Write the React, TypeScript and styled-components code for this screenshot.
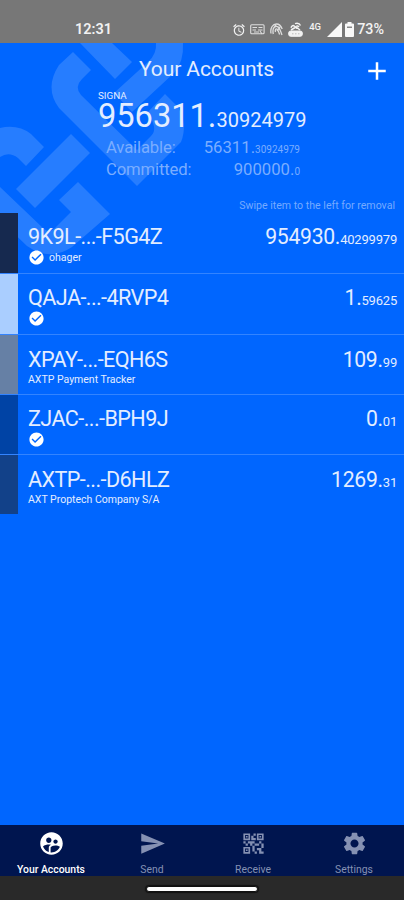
import React from "react";
import styled, { createGlobalStyle } from "styled-components";
import {
  MdAdd,
  MdAlarm,
  MdCheckCircle,
  MdQrCode2,
  MdSend,
  MdSettings,
  MdSupervisedUserCircle,
} from "react-icons/md";

const GlobalStyle = createGlobalStyle`
  * { box-sizing: border-box; }
  html, body { margin: 0; padding: 0; background: #0066ff; }
  body { font-family: Roboto, "Liberation Sans", sans-serif; color: #e3edff; }
`;

const Screen = styled.div`
  width: 404px;
  height: 900px;
  display: flex;
  flex-direction: column;
  overflow: hidden;
  background: #0066ff;
`;

const StatusBar = styled.header`
  height: 43px;
  flex: none;
  display: flex;
  align-items: flex-end;
  justify-content: space-between;
  padding: 0 20px 4px 75px;
  background: #777777;
  color: #f2f2f2;
  font-size: 14.5px;
  font-weight: 600;
  line-height: 19px;
`;

const StatusIcons = styled.div`
  display: flex;
  align-items: center;
  height: 19px;

  svg { flex: none; display: block; }
`;

const Network = styled.span`
  width: 13px;
  margin: 0 5px 6px 6px;
  font-size: 9.5px;
  line-height: 10px;
  font-weight: 500;
`;

const Percent = styled.span`
  margin-left: 3px;
  font-size: 14.3px;
  font-weight: 500;
`;

const Body = styled.main`
  position: relative;
  isolation: isolate;
  flex: 1;
  display: flex;
  flex-direction: column;
`;

const Watermark = styled.svg`
  position: absolute;
  z-index: -1;
  left: 0;
  top: 0;
`;

const TitleBar = styled.div`
  display: grid;
  grid-template-columns: 54px 1fr 54px;
  align-items: center;
  justify-items: center;
  height: 48px;
  padding-top: 4px;
`;

const Title = styled.h1`
  grid-column: 2;
  margin: 0 0 0 9px;
  font-size: 21px;
  line-height: 24px;
  font-weight: 400;
  letter-spacing: -0.1px;
  white-space: nowrap;
`;

const AddButton = styled.button`
  display: flex;
  padding: 0;
  border: 0;
  background: none;
  color: #fff;
  font-size: 30px;
  margin-top: 3px;
`;

const Summary = styled.section`
  height: 108px;
  padding: 0 97px 0 98px;
`;

const Currency = styled.div`
  height: 10px;
  font-size: 9.8px;
  line-height: 10px;
`;

const Total = styled.div`
  height: 36px;
  font-size: 32.6px;
  line-height: 30px;
  white-space: nowrap;

  small { font-size: 20px; }
`;

const Balance = styled.div`
  display: flex;
  justify-content: space-between;
  height: 22px;
  padding: 0 7px 0 8px;
  font-size: 16.7px;
  line-height: 22px;
  color: #7aadff;

  small { font-size: 10px; }
`;

const BalanceLabel = styled.span`
  letter-spacing: -0.15px;
`;

const Hint = styled.p`
  height: 14px;
  margin: 0 9px 0 0;
  text-align: right;
  font-size: 10.6px;
  line-height: 14px;
  color: #75aaff;
`;

const AccountList = styled.ul`
  margin: 0;
  padding: 0;
  list-style: none;
`;

const AccountRow = styled.li<{ $height: number }>`
  display: flex;
  height: ${(p) => p.$height}px;
  border-bottom: 1px solid #3384ff;

  &:last-child { border-bottom: 0; }
`;

const ColorTag = styled.div<{ $color: string }>`
  width: 18px;
  background: ${(p) => p.$color};
`;

const AccountInfo = styled.div<{ $offset: number }>`
  flex: 1;
  padding: ${(p) => p.$offset}px 0 0 10px;
`;

const Address = styled.div`
  font-size: 21.6px;
  line-height: 25px;
  height: 25px;
  letter-spacing: -0.58px;
  white-space: nowrap;
`;

const AccountMeta = styled.div`
  display: flex;
  align-items: center;
  gap: 4px;
  height: 17px;
  font-size: 10.5px;
  line-height: 14px;
  white-space: nowrap;

  svg { display: block; color: #fff; width: 17px; height: 17px; }
`;

const AccountName = styled.span<{ $raised: boolean }>`
  margin-bottom: ${(p) => (p.$raised ? 2 : 0)}px;
`;

const Amount = styled.div<{ $offset: number }>`
  padding: ${(p) => p.$offset}px 7px 0 0;
  font-size: 21.2px;
  line-height: 25px;
  letter-spacing: -0.3px;
  white-space: nowrap;

  small { font-size: 13px; letter-spacing: -0.2px; }
`;

const TabBar = styled.nav`
  flex: none;
  display: grid;
  grid-template-columns: repeat(4, 101px);
  height: 51px;
  background: #00154f;
`;

const Tab = styled.a<{ $active?: boolean }>`
  display: flex;
  flex-direction: column;
  align-items: center;
  padding: 5px 0 0 1px;
  color: ${(p) => (p.$active ? "#ffffff" : "#8591b3")};
  font-size: 10.4px;
  font-weight: ${(p) => (p.$active ? 500 : 400)};
  line-height: 14px;

  svg { width: 27px; height: 27px; margin-bottom: 6px; flex: none; }
`;

const GestureBar = styled.footer`
  flex: none;
  height: 24px;
  display: flex;
  justify-content: center;
  padding-top: 10px;
  background: #292929;
`;

const Handle = styled.div`
  width: 112px;
  height: 6px;
  border: 1px solid #111;
  border-radius: 3px;
  background: #fff;
  box-shadow: 0 0 1px 1px #111;
`;

interface Account {
  address: string;
  name?: string;
  verified?: boolean;
  whole: string;
  fraction: string;
  color: string;
  height: number;
}

const accounts: Account[] = [
  { address: "9K9L-...-F5G4Z", name: "ohager", verified: true, whole: "954930.", fraction: "40299979", color: "#16294f", height: 61 },
  { address: "QAJA-...-4RVP4", verified: true, whole: "1.", fraction: "59625", color: "#aaceff", height: 61 },
  { address: "XPAY-...-EQH6S", name: "AXTP Payment Tracker", whole: "109.", fraction: "99", color: "#6680a5", height: 60 },
  { address: "ZJAC-...-BPH9J", verified: true, whole: "0.", fraction: "01", color: "#0043a5", height: 60 },
  { address: "AXTP-...-D6HLZ", name: "AXT Proptech Company S/A", whole: "1269.", fraction: "31", color: "#124189", height: 59 },
];

const KnotWatermark = () => (
  <Watermark width="190" height="220" viewBox="0 43 190 220" fill="#267dff" aria-hidden>
    <path d="M80 43H112L132 62L115 79Z" />
    <path d="M156 43H183Q184 62 174 73L132 112L114 93L148 62Q157 54 156 43Z" />
    <path d="M73 52L91 70L82 79Q74 87 81 95L137 150L151 136Q159 128 147 113L165 94L178 107Q188 125 181 142L137 186L59 108Q44 88 59 65Z" />
    <path d="M0 128Q18 124 31 134L44 147L26 166L18 158Q9 151 0 157Z" />
    <path d="M71 134L90 153L35 208L16 189Z" />
    <path d="M0 187L44 229Q49 233 54 229L71 212L59 200L78 182L110 214L72 247Q50 262 27 246L0 220Z" />
  </Watermark>
);

const KeyboardGlyph = () => (
  <svg width="15" height="12" viewBox="0 0 15 12" fill="none" stroke="#dedede" strokeWidth="1.1">
    <rect x=".7" y=".8" width="13.4" height="9" rx="1" />
    <path d="M2.5 3.5H7M8.5 3.5H12.5M2.5 6H6M8 6H12.5M4 8H9M10 7L12 10" />
  </svg>
);

const HotspotGlyph = () => (
  <svg width="13" height="13" viewBox="0 0 13 13" fill="none" stroke="#dedede" strokeWidth="1.3">
    <path d="M1 10.5C0 4.5 3 1 6.5 1S11 3 12.2 6M3.3 11C2.2 6 4 3.4 6.5 3.4S10 6.2 12 12M5.5 9C5 7 5.6 5.8 6.6 5.8S8.5 8 9.6 11.5M3 6L6 2M7 8L10 4" />
  </svg>
);

const RouterGlyph = () => (
  <svg width="15" height="15" viewBox="0 0 15 15" fill="none" stroke="#f1f1f1">
    <rect x=".7" y="9" width="13.6" height="5.3" rx="2" fill="#f1f1f1" />
    <path d="M3 5.8Q4 3 6 3.8L9 6.5M7 1.6Q11 .3 12.5 3.5M8.5 4Q10.5 3.5 10.8 5.2M3 8L8 5L12 8" strokeWidth="1.5" />
    <path d="M4 11.8H5.5M7 11.8H8.5M10 11.8H11.5" stroke="#bbb" />
  </svg>
);

const SignalGlyph = () => (
  <svg width="15" height="15" viewBox="0 0 15 15" fill="#f8f8f8"><path d="M15 0V15H0Z" /></svg>
);

const BatteryGlyph = () => (
  <svg width="9" height="15" viewBox="0 0 9 15" fill="#f8f8f8">
    <path d="M2.5 0H6.5V1.5H8Q9 1.5 9 2.5V14Q9 15 8 15H1Q0 15 0 14V2.5Q0 1.5 1 1.5H2.5Z" />
    <path d="M2 4.5H7V6H2Z" fill="#888" />
  </svg>
);

const IconSlot = styled.span<{ $gap: number }>`
  display: flex;
  margin-left: ${(p) => p.$gap}px;
`;

export default function App() {
  return (
    <>
      <GlobalStyle />
      <Screen>
        <StatusBar>
          <span>12:31</span>
          <StatusIcons>
            <IconSlot $gap={0}><MdAlarm size={14} /></IconSlot>
            <IconSlot $gap={4}><KeyboardGlyph /></IconSlot>
            <IconSlot $gap={5}><HotspotGlyph /></IconSlot>
            <IconSlot $gap={5}><RouterGlyph /></IconSlot>
            <Network>4G</Network>
            <IconSlot $gap={0}><SignalGlyph /></IconSlot>
            <IconSlot $gap={3}><BatteryGlyph /></IconSlot>
            <Percent>73%</Percent>
          </StatusIcons>
        </StatusBar>
        <Body>
          <KnotWatermark />
          <TitleBar>
            <Title>Your Accounts</Title>
            <AddButton aria-label="Add account"><MdAdd /></AddButton>
          </TitleBar>
          <Summary>
            <Currency>SIGNA</Currency>
            <Total>956311.<small>30924979</small></Total>
            <Balance>
              <BalanceLabel>Available:</BalanceLabel>
              <span>56311.<small>30924979</small></span>
            </Balance>
            <Balance>
              <BalanceLabel>Committed:</BalanceLabel>
              <span>900000.<small>0</small></span>
            </Balance>
          </Summary>
          <Hint>Swipe item to the left for removal</Hint>
          <AccountList>
            {accounts.map((a) => {
              const offset = a.verified ? 11 : 12;
              return (
                <AccountRow key={a.address} $height={a.height}>
                  <ColorTag $color={a.color} />
                  <AccountInfo $offset={offset}>
                    <Address>{a.address}</Address>
                    <AccountMeta>
                      {a.verified && <MdCheckCircle />}
                      {a.name && <AccountName $raised={!a.verified}>{a.name}</AccountName>}
                    </AccountMeta>
                  </AccountInfo>
                  <Amount $offset={offset}>{a.whole}<small>{a.fraction}</small></Amount>
                </AccountRow>
              );
            })}
          </AccountList>
        </Body>
        <TabBar>
          <Tab $active><MdSupervisedUserCircle />Your Accounts</Tab>
          <Tab><MdSend />Send</Tab>
          <Tab><MdQrCode2 />Receive</Tab>
          <Tab><MdSettings />Settings</Tab>
        </TabBar>
        <GestureBar><Handle /></GestureBar>
      </Screen>
    </>
  );
}
